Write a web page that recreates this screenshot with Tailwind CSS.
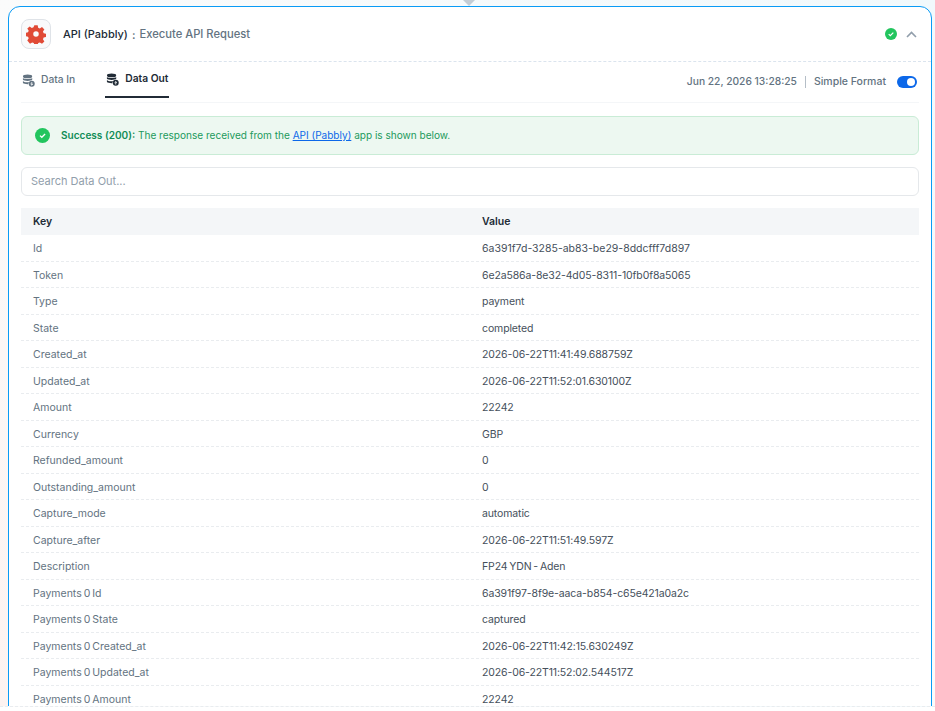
<!DOCTYPE html>
<html lang="en">
<head>
    <meta charset="UTF-8">
    <title>Execute API Request</title>
    <script src="https://cdn.jsdelivr.net/npm/@tailwindcss/browser@4"></script>
</head>
<body class="h-[711px] w-[935px] overflow-hidden bg-white font-['Inter',sans-serif]">
    <div class="relative h-[707px] overflow-hidden border-b border-dashed border-[#e9ecef] bg-linear-to-bl from-[#f1f9fc] via-[#fbfbfb] to-[#fdf3f1]">
        <!-- connector arrow -->
        <div class="absolute left-[463px] top-0 h-0 w-0 border-x-[6px] border-t-[6px] border-x-transparent border-t-[#c4cdd5]"></div>

        <div class="absolute left-[8px] top-[6px] h-[760px] w-[924px] rounded-[12px] border border-[#0a9bf5] bg-white">
            <!-- header -->
            <div class="flex h-[55px] items-center justify-between border-b border-dashed border-[#dbe4ee] pl-[12px] pr-[14px]">
                <div class="flex items-center">
                    <div class="flex h-[30px] w-[30px] items-center justify-center rounded-[8px] border border-[#dfe3e8] bg-[#f9fafb]">
                        <svg width="20" height="20" viewBox="0 0 24 24" fill="#e04a36"><path fill-rule="evenodd" d="M10 1.5h4l.6 3 2 .85 2.6-1.7 2.85 2.85-1.7 2.6.85 2 3 .6v4l-3 .6-.85 2 1.7 2.6-2.85 2.85-2.6-1.7-2 .85-.6 3h-4l-.6-3-2-.85-2.6 1.7L1.55 19.8l1.7-2.6-.85-2-3-.6v-4l3-.6.85-2-1.7-2.6L4.4 2.95l2.6 1.7 2-.85zM12 8.700a3.300 3.300 0 1 0 0 6.600 3.300 3.300 0 0 0 0-6.600z"/></svg>
                    </div>
                    <span class="ml-[12px] text-[11px] font-medium text-[#212b36]">API (Pabbly)</span>
                    <span class="mx-[4px] mt-[2px] text-[11px] font-semibold text-[#637381]">:</span>
                    <span class="text-[11.2px] font-medium text-[#637381]">Execute API Request</span>
                </div>
                <div class="flex items-center gap-[9px]">
                    <svg width="12" height="12" viewBox="0 0 12 12"><circle cx="6" cy="6" r="6" fill="#22c55e"/><path d="M3.7 6.1l1.6 1.500 3-3" fill="none" stroke="#fff" stroke-width="1.2"/></svg>
                    <svg width="11" height="7" viewBox="0 0 11 7"><path d="M1 6l4.500-4.500L10 6" fill="none" stroke="#919eab" stroke-width="1.6"/></svg>
                </div>
            </div>

            <div class="px-[12px]">
                <!-- tabs -->
                <div class="flex h-[41px] items-center justify-between border-b border-[#f4f6f8]">
                    <div class="flex h-full items-start gap-[30px]">
                        <div class="flex h-[36px] items-center gap-[6px] pl-[1px] text-[10.25px] font-medium text-[#637381]">
                            <svg width="13" height="13" viewBox="0 0 14 14" fill="#637381"><ellipse cx="6" cy="2.600" rx="5" ry="2.100"/><path d="M1 4.300c1 1.500 9 1.500 10 0v2C10 7.800 2 7.800 1 6.300zM1 7.600c1 1.400 5 1.700 7 .9-.8.700-1.200 1.600-1.200 2.500C4.500 11.100 1.800 10.800 1 9.800z"/><circle cx="10.500" cy="10.600" r="3.200"/><path d="M10.500 8.800v3M9.200 10.700l1.300 1.200 1.300-1.200" fill="none" stroke="#fff" stroke-width=".9"/></svg>
                            <span>Data In</span>
                        </div>
                        <div class="flex h-[36px] items-center gap-[6px] border-b-2 border-[#212b36] px-[1px] text-[10.25px] font-semibold text-[#212b36]">
                            <svg width="13" height="13" viewBox="0 0 14 14" fill="#212b36"><ellipse cx="6" cy="2.600" rx="5" ry="2.100"/><path d="M1 4.300c1 1.500 9 1.500 10 0v2C10 7.800 2 7.800 1 6.300zM1 7.600c1 1.400 5 1.700 7 .9-.8.700-1.200 1.600-1.200 2.500C4.500 11.100 1.800 10.800 1 9.800z"/><circle cx="10.500" cy="10.600" r="3.200"/><path d="M10.500 12.400v-3M9.200 10.500l1.300-1.200 1.300 1.200" fill="none" stroke="#fff" stroke-width=".9"/></svg>
                            <span>Data Out</span>
                        </div>
                    </div>
                    <div class="flex items-center pr-[2px] text-[10.25px] font-medium text-[#637381]">
                        <span>Jun 22, 2026 13:28:25</span>
                        <span class="mx-[8px] h-[12px] w-px bg-[#b5bec7]"></span>
                        <span class="text-[10.5px]">Simple Format</span>
                        <span class="ml-[11px] flex h-[12px] w-[20px] items-center justify-end rounded-full bg-[#0c68e9] pr-[2px]">
                            <span class="h-[8px] w-[8px] rounded-full bg-white"></span>
                        </span>
                    </div>
                </div>

                <!-- success alert -->
                <div class="mt-[13px] flex h-[39px] items-center rounded-[6px] border border-[#c9ecd6] bg-[#edf8f1] pl-[13px] text-[10.05px] text-[#229a5c]">
                    <svg width="15" height="15" viewBox="0 0 15 15"><circle cx="7.500" cy="7.500" r="7.500" fill="#22c55e"/><path d="M5 7.600l1.800 1.700 3.300-3.300" fill="none" stroke="#fff" stroke-width="1.300"/></svg>
                    <span class="ml-[11px]"><b class="font-semibold text-[#118d57]">Success (200):</b> The response received from the <a class="text-[#0c68e9] underline">API (Pabbly)</a> app is shown below.</span>
                </div>

                <!-- search -->
                <div class="mt-[12px] flex h-[29px] items-center rounded-[6px] border border-[#e5e8eb] pl-[9px] text-[11px] text-[#919eab]">Search Data Out...</div>

                <!-- table -->
                <div class="mt-[12px]" id="table">
                    <div class="flex h-[27px] items-center bg-[#f4f6f8] text-[10.5px] font-semibold text-[#212b36]">
                        <div class="w-[461px] pl-[12px]">Key</div>
                        <div>Value</div>
                    </div>
                </div>
            </div>
        </div>
    </div>

    <script>
        const rows = [
            ['Id', '6a391f7d-3285-ab83-be29-8ddcfff7d897'],
            ['Token', '6e2a586a-8e32-4d05-8311-10fb0f8a5065'],
            ['Type', 'payment'],
            ['State', 'completed'],
            ['Created_at', '2026-06-22T11:41:49.688759Z'],
            ['Updated_at', '2026-06-22T11:52:01.630100Z'],
            ['Amount', '22242'],
            ['Currency', 'GBP'],
            ['Refunded_amount', '0'],
            ['Outstanding_amount', '0'],
            ['Capture_mode', 'automatic'],
            ['Capture_after', '2026-06-22T11:51:49.597Z'],
            ['Description', 'FP24 YDN - Aden'],
            ['Payments 0 Id', '6a391f97-8f9e-aaca-b854-c65e421a0a2c'],
            ['Payments 0 State', 'captured'],
            ['Payments 0 Created_at', '2026-06-22T11:42:15.630249Z'],
            ['Payments 0 Updated_at', '2026-06-22T11:52:02.544517Z'],
            ['Payments 0 Amount', '22242'],
        ];
        const table = document.getElementById('table');
        rows.forEach(([key, value]) => {
            const row = document.createElement('div');
            row.className = 'flex h-[26.5px] items-center border-b border-dashed border-[#e9ecef] pt-[3px] text-[10.5px] [word-spacing:-1px]';
            const spacing = key === 'Id' ? 'tracking-normal' : 'tracking-[-0.12px]';
            row.innerHTML = `<div class="w-[461px] pl-[12px] text-[#637381]"></div><div class="text-[#454f5b] ${spacing}"></div>`;
            row.children[0].textContent = key;
            row.children[1].textContent = value;
            table.appendChild(row);
        });
    </script>
</body>
</html>
